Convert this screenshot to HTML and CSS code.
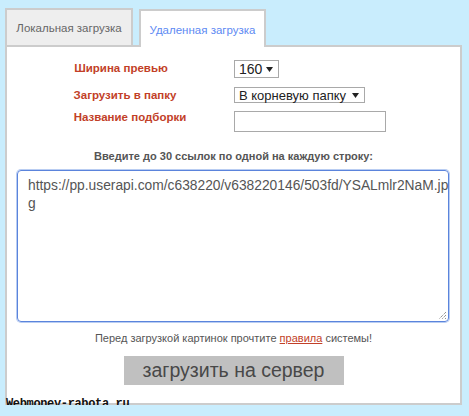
FILE: index.html
```html
<!DOCTYPE html>
<html lang="ru">
<head>
    <meta charset="UTF-8">
    <meta name="viewport" content="width=device-width, initial-scale=1.0">
    <title>Загрузка картинок</title>
    <link rel="stylesheet" href="styles.css">
</head>
<body>
    <div class="page">
        <div class="tabs">
            <div class="tab">Локальная загрузка</div>
            <div class="tab active">Удаленная загрузка</div>
        </div>

        <div class="panel">
            <div class="form">
                <div class="row row-width">
                    <div class="label">Ширина превью</div>
                    <div class="select select-small">
                        <span>160</span>
                        <svg class="arrow" width="7" height="5" viewBox="0 0 7 5"><path d="M0 0h7L3.5 5z" fill="#222"/></svg>
                    </div>
                </div>
                <div class="row row-folder">
                    <div class="label">Загрузить в папку</div>
                    <div class="select select-wide">
                        <span>В корневую папку</span>
                        <svg class="arrow" width="7" height="5" viewBox="0 0 7 5"><path d="M0 0h7L3.5 5z" fill="#222"/></svg>
                    </div>
                </div>
                <div class="row row-name">
                    <div class="label">Название подборки</div>
                    <div class="input"></div>
                </div>
            </div>

            <p class="hint">Введите до 30 ссылок по одной на каждую строку:</p>

            <div class="links">
                https://pp.userapi.com/c638220/v638220146/503fd/YSALmlr2NaM.jp<br>g
                <svg class="grip" width="10" height="10" viewBox="0 0 10 10">
                    <path d="M9 2L2 9M9 5L5 9M9 8L8 9" stroke="#666" stroke-width="1" stroke-dasharray="1 1"/>
                </svg>
            </div>

            <p class="notice">Перед загрузкой картинок прочтите <a href="#">правила</a> системы!</p>

            <div class="actions">
                <button class="upload">загрузить на сервер</button>
            </div>
        </div>

        <div class="watermark">Webmoney-rabota.ru</div>
    </div>
</body>
</html>
```

FILE: styles.css
```css
body {
    margin: 0;
    background: #c9edfd;
    font-family: "Liberation Sans", Arial, sans-serif;
}
.page {
    position: relative;
    width: 457px;
    padding: 8px 0 0 5px;
}
.tabs {
    display: flex;
    align-items: flex-end;
    gap: 6px;
}
.tab {
    box-sizing: border-box;
    width: 128px;
    height: 37px;
    border: 2px solid #ccc;
    border-bottom: none;
    background: #eee;
    color: #666;
    font-size: 11.5px;
    line-height: 36px;
    text-align: center;
}
.tab.active {
    position: relative;
    z-index: 1;
    width: 127px;
    height: 38px;
    margin-bottom: -2px;
    background: #fff;
    color: #5d8af3;
    line-height: 38px;
}
.panel {
    box-sizing: border-box;
    height: 360px;
    border: 2px solid #ccc;
    background: #fff;
    padding-top: 13px;
}
.form {
    padding-left: 16px;
}
.row {
    display: flex;
    align-items: flex-start;
    gap: 7px;
}
.row-folder {
    margin-top: 9px;
}
.row-name {
    margin-top: 7px;
}
.label {
    box-sizing: border-box;
    width: 204px;
    text-align: center;
    color: #c23f28;
    font-weight: bold;
    font-size: 11.5px;
    line-height: 17px;
}
.row-width .label {
    padding-right: 8px;
}
.row-name .label {
    margin-top: -2px;
    padding-left: 10px;
}
.select {
    box-sizing: border-box;
    display: flex;
    align-items: center;
    justify-content: space-between;
    border: 1px solid #a9a9a9;
    background: #fff;
    color: #222;
    font-size: 13px;
    padding: 0 5px 0 4px;
}
.select-small {
    width: 45px;
    height: 18px;
    font-size: 14px;
}
.select-wide {
    width: 131px;
    height: 16px;
}
.arrow {
    flex: none;
}
.input {
    box-sizing: border-box;
    width: 152px;
    height: 21px;
    border: 1px solid #a9a9a9;
}
.hint {
    margin: 17px 0 0;
    text-align: center;
    color: #555;
    font-weight: bold;
    font-size: 11px;
    line-height: 14px;
}
.links {
    position: relative;
    box-sizing: border-box;
    height: 152px;
    margin: 7px 11px 0 10px;
    padding: 6px 10px;
    border: 1px solid #5b84dc;
    border-radius: 4px;
    box-shadow: 0 0 0 1px #b9cdf2;
    color: #555;
    font-size: 13.8px;
    line-height: 18px;
    white-space: nowrap;
}
.grip {
    position: absolute;
    right: 1px;
    bottom: 1px;
}
.notice {
    margin: 9px 0 0;
    text-align: center;
    color: #555;
    font-size: 11px;
    line-height: 14px;
}
.notice a {
    color: #c23f28;
}
.actions {
    display: flex;
    justify-content: center;
    margin-top: 11px;
}
.upload {
    width: 220px;
    height: 29px;
    border: none;
    background: #c0c0c0;
    color: #484848;
    font-family: "Liberation Sans", Arial, sans-serif;
    font-size: 19.5px;
    padding: 0;
}
/* serif mono for the site stamp in the corner */
.watermark {
    position: absolute;
    left: 6px;
    top: 397px;
    font-family: "Courier New", "Liberation Mono", monospace;
    font-weight: bold;
    font-size: 12px;
    letter-spacing: -0.35px;
    line-height: 14px;
    color: #111;
}
```
